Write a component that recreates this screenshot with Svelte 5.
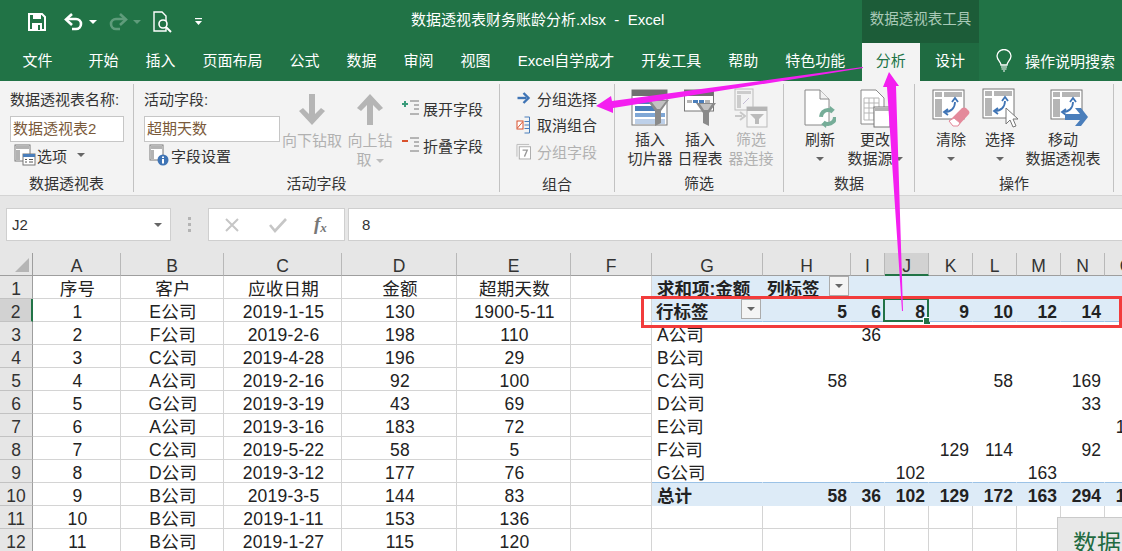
<script>
  const tabs = ["文件", "开始", "插入", "页面布局", "公式", "数据", "审阅", "视图", "Excel自学成才", "开发工具", "帮助", "特色功能"];
  const letters = ["A", "B", "C", "D", "E", "F", "G", "H", "I", "J", "K", "L", "M", "N", "O"];

  // left table, columns A-E
  const left = [
    ["序号", "客户", "应收日期", "金额", "超期天数"],
    ["1", "E公司", "2019-1-15", "130", "1900-5-11"],
    ["2", "F公司", "2019-2-6", "198", "110"],
    ["3", "C公司", "2019-4-28", "196", "29"],
    ["4", "A公司", "2019-2-16", "92", "100"],
    ["5", "G公司", "2019-3-19", "43", "69"],
    ["6", "A公司", "2019-3-16", "183", "72"],
    ["7", "C公司", "2019-5-22", "58", "5"],
    ["8", "D公司", "2019-3-12", "177", "76"],
    ["9", "B公司", "2019-3-5", "144", "83"],
    ["10", "B公司", "2019-1-11", "153", "136"],
    ["11", "B公司", "2019-1-27", "115", "120"]
  ];

  // pivot, columns G-O
  const pivot = [
    ["求和项:金额", "列标签", "", "", "", "", "", "", ""],
    ["行标签", "5", "6", "8", "9", "10", "12", "14", ""],
    ["A公司", "", "36", "", "", "", "", "", ""],
    ["B公司", "", "", "", "", "", "", "", ""],
    ["C公司", "58", "", "", "", "58", "", "169", ""],
    ["D公司", "", "", "", "", "", "", "33", ""],
    ["E公司", "", "", "", "", "", "", "", "130"],
    ["F公司", "", "", "", "129", "114", "", "92", ""],
    ["G公司", "", "", "102", "", "", "163", "", ""],
    ["总计", "58", "36", "102", "129", "172", "163", "294", "130"],
    ["", "", "", "", "", "", "", "", ""],
    ["", "", "", "", "", "", "", "", ""]
  ];
</script>

<div class="page">
  <header class="titlebar">
    <div class="qat">
      <svg width="18" height="18" viewBox="0 0 18 18"><path d="M1 1h13l3 3v13H1z" fill="none" stroke="#fff" stroke-width="2"/><rect x="5" y="1" width="8" height="5" fill="#fff"/><rect x="4" y="10" width="10" height="7" fill="#fff"/><rect x="10" y="12" width="2" height="5" fill="#217346"/></svg>
      <svg class="undo" width="20" height="18" viewBox="0 0 20 18"><path d="M3 6h9a5 5 0 0 1 0 10H8" fill="none" stroke="#fff" stroke-width="2.6"/><path d="M8 1L2 6.500 8 12" fill="none" stroke="#fff" stroke-width="2.600"/></svg>
      <i class="caret white"></i>
      <svg class="redo" width="20" height="18" viewBox="0 0 20 18"><path d="M17 6H8a5 5 0 0 0 0 10h4" fill="none" stroke="#5f9c7b" stroke-width="2.6"/><path d="M12 1l6 5.500-6 5.500" fill="none" stroke="#5f9c7b" stroke-width="2.600"/></svg>
      <i class="caret dim"></i>
      <svg class="preview" width="20" height="22" viewBox="0 0 20 22"><path d="M1 1h8l4 4v15H1z" fill="#217346" stroke="#fff" stroke-width="1.400"/><circle cx="10" cy="13" r="4" fill="#217346" stroke="#fff" stroke-width="1.600"/><path d="M13 16l5 5" stroke="#fff" stroke-width="2"/></svg>
      <svg class="custom" width="8" height="8" viewBox="0 0 8 8"><rect y="0" width="7" height="1.200" fill="#fff"/><path d="M0 3h7L3.500 7z" fill="#fff"/></svg>
    </div>
    <div class="title">数据透视表财务账龄分析.xlsx&nbsp; -&nbsp; Excel</div>
    <div class="ctx">数据透视表工具</div>
  </header>

  <nav class="tabs">
    {#each tabs as t, i (t)}
      <span class="tab" class:first={i === 0}>{t}</span>
    {/each}
    <span class="tab active">分析</span>
    <span class="tab design">设计</span>
    <div class="search">
      <svg width="18" height="23" viewBox="0 0 18 23"><path d="M6 16c0-3-4-5-4-9a7 6.500 0 0 1 14 0c0 4-4 6-4 9z" fill="none" stroke="#fff" stroke-width="1.300"/><path d="M6 18h6M6.500 20h5M8 22h2" stroke="#fff" stroke-width="1.200"/></svg>
      <span>操作说明搜索</span>
    </div>
  </nav>

  <section class="ribbon">
    <div class="group g1">
      <div class="body col">
        <div class="lbl">数据透视表名称:</div>
        <div class="inp w114">数据透视表2</div>
        <div class="row opt">
          <svg width="22" height="22" viewBox="0 0 22 22"><rect x="1" y="1" width="15" height="16" fill="#fff" stroke="#777"/><rect x="2" y="2" width="13" height="3" fill="#b3b3b3"/><rect x="2" y="6" width="4" height="10" fill="#b3b3b3"/><rect x="9" y="10" width="12" height="11" fill="#fff" stroke="#777"/><rect x="9" y="10" width="12" height="3" fill="#4a7ebb"/><path d="M11 15.500h2M15 15.500h4M11 18h2M15 18h4" stroke="#555"/></svg>
          <span>选项</span>
          <i class="caret gray opt-caret"></i>
        </div>
      </div>
      <div class="glabel">数据透视表</div>
    </div>

    <div class="group g2">
      <div class="body">
        <div class="col field">
          <div class="lbl">活动字段:</div>
          <div class="inp w136">超期天数</div>
          <div class="row opt sett">
            <svg width="20" height="22" viewBox="0 0 20 22"><rect x="1" y="1" width="13" height="15" fill="#fff" stroke="#777"/><rect x="2" y="2" width="11" height="3" fill="#b3b3b3"/><rect x="2" y="6" width="3" height="9" fill="#b3b3b3"/><circle cx="14" cy="16" r="5.500" fill="#3f74b5"/><rect x="13" y="15" width="2" height="4.500" fill="#fff"/><rect x="13" y="12.500" width="2" height="1.500" fill="#fff"/></svg>
            <span>字段设置</span>
          </div>
        </div>
        <div class="big off down">
          <svg width="28" height="34" viewBox="0 0 28 34"><path d="M14 32L1 18l4-3 6 6V1h6v20l6-6 4 3z" fill="#b5b5b5"/></svg>
          <span>向下钻取</span>
        </div>
        <div class="big off up">
          <svg width="28" height="34" viewBox="0 0 28 34"><path d="M14 1L1 15l4 3 6-6v20h6V12l6 6 4-3z" fill="#b5b5b5"/></svg>
          <span>向上钻</span>
          <span>取 <i class="caret light"></i></span>
        </div>
        <div class="col stack2">
          <div class="row">
            <svg width="18" height="16" viewBox="0 0 18 16"><path d="M0 4h6M3 1v6" stroke="#3a9b7a" stroke-width="2"/><path d="M8 1h9M12 5h5M12 9h5M8 14h9" stroke="#777"/></svg>
            <span>展开字段</span>
          </div>
          <div class="row">
            <svg width="18" height="16" viewBox="0 0 18 16"><path d="M0 4h6" stroke="#d9512c" stroke-width="2"/><path d="M8 1h9M12 5h5M12 9h5M8 14h9" stroke="#777"/></svg>
            <span>折叠字段</span>
          </div>
        </div>
      </div>
      <div class="glabel">活动字段</div>
    </div>

    <div class="group g3">
      <div class="body col stack3">
        <div class="row">
          <svg width="14" height="12" viewBox="0 0 14 12"><path d="M1 6h9" stroke="#3f74b5" stroke-width="2.400"/><path d="M7 1l5 5-5 5" fill="none" stroke="#3f74b5" stroke-width="2.400"/></svg>
          <span>分组选择</span>
        </div>
        <div class="row">
          <svg width="14" height="18" viewBox="0 0 14 18"><rect x="0.500" y="5" width="6" height="8" fill="#fff" stroke="#d9512c"/><path d="M1 12l5-6" stroke="#d9512c"/><path d="M8 1h5v16H8M8 5.500h5M8 9h5M8 12.500h5" fill="none" stroke="#4a7ebb"/></svg>
          <span>取消组合</span>
        </div>
        <div class="row off">
          <svg width="16" height="18" viewBox="0 0 16 18"><path d="M1 15V2h13" fill="none" stroke="#bbb"/><rect x="3.500" y="4.500" width="12" height="13" fill="#fff" stroke="#aaa"/><path d="M7 8h5l-3 7" fill="none" stroke="#999" stroke-width="1.400"/></svg>
          <span>分组字段</span>
        </div>
      </div>
      <div class="glabel">组合</div>
    </div>

    <div class="group g4">
      <div class="body">
        <div class="big slicer">
          <svg width="38" height="38" viewBox="0 0 38 38"><rect x="1" y="1" width="35" height="35" fill="#fff" stroke="#777"/><rect x="1" y="1" width="35" height="6" fill="#707070"/><rect x="4" y="10" width="22" height="5" fill="#4a7ebb"/><rect x="4" y="17" width="26" height="5" fill="#4a7ebb"/><rect x="4" y="24" width="30" height="4" fill="#7fa7d6"/><rect x="4" y="30" width="30" height="5" fill="#bdd0e9"/><path d="M16 11h22l-8 11v12l-6 3V22z" fill="#8a8a8a"/><path d="M20 12h15l-6 8h-3z" fill="#c2c2c2"/></svg>
          <span>插入</span>
          <span>切片器</span>
        </div>
        <div class="big slicer">
          <svg width="32" height="38" viewBox="0 0 32 38"><rect x="0.500" y="1" width="29" height="21" fill="#fff" stroke="#777"/><rect x="0.500" y="1" width="29" height="6" fill="#707070"/><rect x="3" y="11" width="5" height="3" fill="#b5b5b5"/><rect x="9" y="11" width="5" height="3" fill="#4a7ebb"/><rect x="15" y="11" width="5" height="3" fill="#4a7ebb"/><rect x="21" y="11" width="5" height="3" fill="#b5b5b5"/><path d="M12 14h20l-7 10v13l-6-3V24z" fill="#8a8a8a"/><path d="M16 15h12l-4 6h-4z" fill="#c2c2c2"/></svg>
          <span>插入</span>
          <span>日程表</span>
        </div>
        <div class="big off conn">
          <svg width="34" height="40" viewBox="0 0 34 40"><rect x="1" y="1" width="18" height="21" fill="#f3f3f3" stroke="#bbb"/><rect x="3" y="3" width="14" height="3" fill="#ccc"/><rect x="3" y="7" width="4" height="13" fill="#ccc"/><path d="M9 16l6-6" stroke="#c4bcd4"/><rect x="13" y="19" width="20" height="20" fill="#f6f6f6" stroke="#bbb"/><rect x="13" y="19" width="20" height="4" fill="#b5b5b5"/><path d="M16 26h14l-5 5v5h-4v-5z" fill="#bbb"/><path d="M1 28h7M6 24l5 4-5 4" fill="none" stroke="#c8c8c8" stroke-width="2"/></svg>
          <span>筛选</span>
          <span>器连接</span>
        </div>
      </div>
      <div class="glabel">筛选</div>
    </div>

    <div class="group g5">
      <div class="body">
        <div class="big refresh">
          <svg width="32" height="38" viewBox="0 0 32 38"><path d="M1 1h15l9 9v26H1z" fill="#fff" stroke="#888"/><path d="M16 1v9h9" fill="#f3f3f3" stroke="#888"/><circle cx="24" cy="28" r="7" fill="none" stroke="#76ad98" stroke-width="4" stroke-dasharray="16 6"/><path d="M26 17l5 4-6 2zM22 39l-5-4 6-2z" fill="#76ad98"/></svg>
          <span>刷新</span>
          <i class="caret gray"></i>
        </div>
        <div class="big change">
          <svg width="30" height="38" viewBox="0 0 30 38"><path d="M1 1h15l8 8v26H1z" fill="#fff" stroke="#888"/><path d="M4 9h15v22H4zM9 9v22M14 9v22M4 14h15M4 19h15M4 24h15" fill="none" stroke="#b5b5b5"/><rect x="14" y="18" width="16" height="20" fill="#fff" stroke="#777"/><rect x="15" y="19" width="14" height="3" fill="#b3b3b3"/></svg>
          <span>更改</span>
          <span>数据源<i class="caret gray near"></i></span>
        </div>
      </div>
      <div class="glabel">数据</div>
    </div>

    <div class="group g6">
      <div class="body">
        <div class="big clear">
          <svg width="38" height="38" viewBox="0 0 38 38"><rect x="1" y="1" width="31" height="29" fill="#fff" stroke="#777"/><rect x="3" y="3" width="7" height="5" fill="#b5b5b5"/><rect x="12" y="3" width="18" height="5" fill="#b5b5b5"/><rect x="3" y="10" width="7" height="18" fill="#b5b5b5"/><path d="M13 23c6 0 10-4 10-10M20 13l3-4 3 4M16 20l-4 3 4 3" fill="none" stroke="#3f74b5" stroke-width="1.800"/><path d="M17 32l13-13q2-1 4 0l3 3q1 2 0 3L26 37h-5z" fill="#e48a9b"/><path d="M17 32l4 5h5l2-3-6-5z" fill="#fff" stroke="#e48a9b"/></svg>
          <span>清除</span>
          <i class="caret gray"></i>
        </div>
        <div class="big pick">
          <svg width="36" height="40" viewBox="0 0 36 40"><rect x="1" y="1" width="31" height="29" fill="#fff" stroke="#777"/><rect x="3" y="3" width="7" height="5" fill="#b5b5b5"/><rect x="12" y="3" width="18" height="5" fill="#b5b5b5"/><rect x="3" y="10" width="7" height="18" fill="#b5b5b5"/><path d="M13 23c6 0 10-4 10-10M20 13l3-4 3 4M16 20l-4 3 4 3" fill="none" stroke="#3f74b5" stroke-width="1.800"/><path d="M24 20v16l4-4 3 7 3-1-3-7h5z" fill="#fff" stroke="#777"/></svg>
          <span>选择</span>
          <i class="caret gray"></i>
        </div>
        <div class="big move">
          <svg width="38" height="38" viewBox="0 0 38 38"><rect x="1" y="1" width="31" height="29" fill="#fff" stroke="#777"/><rect x="3" y="3" width="7" height="5" fill="#b5b5b5"/><rect x="12" y="3" width="18" height="5" fill="#b5b5b5"/><rect x="3" y="10" width="7" height="18" fill="#b5b5b5"/><path d="M13 23c6 0 10-4 10-10M20 13l3-4 3 4M16 20l-4 3 4 3" fill="none" stroke="#3f74b5" stroke-width="1.800"/><path d="M15 25h15l-5-6h6l7 9-7 9h-6l5-6H15z" fill="#4a7ebb"/></svg>
          <span>移动</span>
          <span>数据透视表</span>
        </div>
      </div>
      <div class="glabel">操作</div>
    </div>
  </section>

  <section class="formula">
    <div class="namebox"><span>J2</span><i class="caret gray"></i></div>
    <div class="dots"><b></b><b></b><b></b></div>
    <div class="fbtns">
      <svg width="16" height="16" viewBox="0 0 16 16"><path d="M2 2l12 12M14 2L2 14" stroke="#c6c6c6" stroke-width="2"/></svg>
      <svg width="18" height="16" viewBox="0 0 18 16"><path d="M1 8l5 6L17 2" fill="none" stroke="#c6c6c6" stroke-width="2.600"/></svg>
      <span class="fx">f<sub>x</sub></span>
    </div>
    <div class="finput">8</div>
  </section>

  <section class="sheet">
    <div class="hd corner"><svg width="14" height="14" viewBox="0 0 14 14"><path d="M14 0v14H0z" fill="#b5b5b5"/></svg></div>
    {#each letters as l (l)}
      <div class="hd" class:sel={l === "J"}>{l}</div>
    {/each}

    {#each left as row, r}
      <div class="rh" class:sel={r === 1}>{r + 1}</div>
      {#each row as v}
        <div class="c mid">{v}</div>
      {/each}
      <div class="c"></div>
      {#each pivot[r] as v, i}
        <div
          class="c"
          class:pv={r < 10}
          class:blue={r < 2 || r === 9}
          class:strong={r < 2 || r === 9}
          class:line={r === 1 || r === 8}
          class:num={i > 0 && r > 0}
          class:lft={i === 0}
          class:withbtn={(r === 0 && i === 1) || (r === 1 && i === 0)}
        >
          <span>{v}</span>
          {#if (r === 0 && i === 1) || (r === 1 && i === 0)}
            <i class="drop"><i class="caret gray"></i></i>
          {/if}
          {#if r === 1 && i === 3}
            <i class="cursor"></i>
            <i class="handle"></i>
          {/if}
        </div>
      {/each}
    {/each}
  </section>

  <div class="redbox"></div>
  <div class="floating">数据</div>

  <svg class="arrows" width="1122" height="551" viewBox="0 0 1122 551">
    <path d="M863 67L612 101l-1-5-15 10 17 7v-5L863 68z" fill="#f41ff0"/>
    <path d="M889 72L899 86L896 86L903 311L902 311L887 87L883 87z" fill="#f41ff0"/>
  </svg>
</div>

<style>
  :global(body) {
    margin: 0;
    overflow: hidden;
  }
  .page {
    position: relative;
    width: 1122px;
    height: 551px;
    overflow: hidden;
    font-family: "Liberation Sans", "Noto Sans CJK SC", sans-serif;
    font-size: 15px;
    color: #333;
  }
  .titlebar {
    display: flex;
    height: 43px;
    background: #217346;
    color: #fff;
  }
  .qat {
    width: 383px;
    padding-left: 28px;
    display: flex;
    align-items: center;
  }
  .undo { margin-left: 18px; }
  .qat .caret { margin-left: 5px; }
  .redo { margin-left: 11px; }
  .preview { margin-left: 12px; }
  .custom { margin-left: 22px; }
  .title {
    width: 451px;
    font-size: 15px;
    line-height: 39px;
    white-space: nowrap;
  }
  .ctx {
    width: 117px;
    background: #1c5c38;
    color: #a9c9b7;
    text-align: center;
    line-height: 38px;
    font-size: 14.500px;
  }
  .tabs {
    display: flex;
    height: 38px;
    align-items: stretch;
    background: #217346;
    color: #fff;
    padding-left: 9px;
  }
  .tab {
    padding: 0 13.500px;
    line-height: 35px;
    white-space: nowrap;
  }
  .tab.first { margin-right: 9px; }
  .tab.active {
    margin-left: 3px;
    padding: 0 14px;
    background: #f3f3f3;
    color: #217346;
  }
  .tab.design {
    width: 59px;
    box-sizing: border-box;
    padding: 0 15px;
    background: #1f6b41;
  }
  .search {
    display: flex;
    align-items: center;
    color: #fff;
    padding-left: 16px;
    gap: 12px;
    margin-top: -3px;
  }
  .ribbon {
    display: flex;
    background: #f3f3f3;
    border-bottom: 1px solid #d4d4d4;
    padding-top: 3px;
    height: 111px;
  }
  .group {
    display: flex;
    flex-direction: column;
    box-sizing: border-box;
    height: 108px;
    border-right: 1px solid #c2c2c2;
    flex: none;
  }
  .g1 { width: 134px; padding-left: 10px; }
  .g2 { width: 366px; }
  .g3 { width: 115px; }
  .g4 { width: 169px; }
  .g5 { width: 131px; }
  .g6 { width: 199px; }
  .body {
    display: flex;
    flex: none;
    height: 87px;
  }
  .col {
    display: flex;
    flex-direction: column;
  }
  .row {
    display: flex;
    align-items: center;
  }
  .glabel {
    height: 18px;
    margin-top: 3px;
    text-align: center;
    line-height: 20px;
  }
  .g1 .glabel { margin-left: -10px; }
  .lbl {
    line-height: 20px;
    margin-top: 6px;
    white-space: nowrap;
  }
  .inp {
    box-sizing: border-box;
    height: 26px;
    margin-top: 6px;
    background: #fff;
    border: 1px solid #c6c6c6;
    line-height: 24px;
    padding-left: 2px;
    color: #7a5a3a;
  }
  .w114 { width: 114px; }
  .w136 { width: 136px; }
  .opt {
    margin-top: 2px;
    margin-left: 4px;
    gap: 1px;
    height: 22px;
  }
  .opt-caret { margin-left: 9px; }
  .field { width: 136px; margin-left: 10px; }
  .sett { margin-left: 5px; gap: 2px; }
  .big {
    display: flex;
    flex-direction: column;
    align-items: center;
    flex: none;
    line-height: 19px;
    white-space: nowrap;
  }
  .big svg {
    height: 40px;
    margin-top: 4px;
    margin-bottom: 2px;
    flex: none;
  }
  .off { color: #b1b1b1; }
  .off .caret { border-top-color: #b1b1b1; }
  .down { width: 62px; margin-left: 1px; }
  .down svg { margin-top: 6px; margin-bottom: 1px; }
  .up { width: 50px; margin-left: 2px; margin-right: 7px; }
  .up svg { margin-top: 6px; margin-bottom: 1px; }
  .stack2 { padding-top: 14px; gap: 17px; }
  .stack2 .row { height: 20px; gap: 3px; }
  .stack3 { padding: 1px 0 0 16px; }
  .stack3 .row { height: 26.500px; }
  .stack3 svg { width: 15px; margin-right: 6px; flex: none; }
  .slicer { width: 50px; }
  .g4 .body { padding-left: 10px; }
  .conn { width: 50px; margin-left: 1px; }
  .big .caret { margin-top: 8px; }
  .g5 .body { padding-left: 11px; }
  .refresh { width: 50px; }
  .change { width: 60px; margin-left: 0; }
  .big .near { margin: 0 0 3px 2px; }
  .g6 .body { padding-left: 11px; }
  .clear { width: 50px; }
  .pick { width: 48px; }
  .move { width: 78px; }
  .move svg { margin-left: 12px; }

  .caret {
    display: inline-block;
    width: 0;
    height: 0;
    border-left: 4px solid transparent;
    border-right: 4px solid transparent;
    border-top: 4px solid #666;
    flex: none;
  }
  .caret.white { border-top-color: #fff; }
  .caret.dim { border-top-color: #5f9c7b; }
  .caret.light { border-top-color: #bdbdbd; vertical-align: 2px; }

  .formula {
    display: flex;
    align-items: center;
    height: 57px;
    padding-left: 6px;
    box-sizing: border-box;
    background: #e6e6e6;
  }
  .namebox, .fbtns, .finput {
    box-sizing: border-box;
    height: 33px;
    background: #fff;
    border: 1px solid #cfcfcf;
    display: flex;
    align-items: center;
  }
  .namebox {
    width: 165px;
    justify-content: space-between;
    padding: 0 8px 0 5px;
  }
  .dots {
    width: 37px;
    display: flex;
    flex-direction: column;
    align-items: center;
    gap: 3px;
  }
  .dots b {
    width: 3px;
    height: 3px;
    background: #b4b4b4;
  }
  .fbtns {
    width: 137px;
    padding-left: 15px;
    gap: 29px;
  }
  .fx {
    margin-left: -2px;
    font-family: "Liberation Serif", serif;
    font-style: italic;
    font-weight: bold;
    font-size: 19px;
    color: #777;
  }
  .fx sub { font-size: 13px; vertical-align: -2px; }
  .finput {
    flex: 1;
    margin-left: 3px;
    padding-left: 13px;
    border-right: none;
  }

  .sheet {
    display: grid;
    grid-template-columns: 33px 88px 103px 118px 115px 114px 81px 111px 88px 34px 44px 44px 44px 44px 44px 44px;
    grid-auto-rows: 23px;
    width: 1149px;
    font-size: 17.500px;
    line-height: 26px;
    color: #222;
    background: #fff;
  }
  .hd, .rh, .c {
    box-sizing: border-box;
    white-space: nowrap;
  }
  .hd {
    background: #e6e6e6;
    border-right: 1px solid #b8b8b8;
    border-bottom: 1px solid #9e9e9e;
    text-align: center;
    color: #333;
  }
  .hd.corner {
    display: flex;
    justify-content: flex-end;
    align-items: flex-end;
    padding: 0 3px 3px 0;
    border-right-color: #9e9e9e;
  }
  .hd.sel {
    background: #d2d2d2;
    border-bottom: 2px solid #217346;
  }
  .rh {
    background: #e6e6e6;
    border-right: 1px solid #9e9e9e;
    border-bottom: 1px solid #c2c2c2;
    text-align: center;
    color: #333;
  }
  .rh.sel {
    background: #d2d2d2;
    border-right: 2px solid #217346;
  }
  .c {
    position: relative;
    border-right: 1px solid #d4d4d4;
    border-bottom: 1px solid #d4d4d4;
  }
  .mid {
    text-align: center;
    letter-spacing: 0.200px;
    padding-left: 2px;
  }
  .pv {
    border-right-color: transparent;
    border-bottom-color: transparent;
  }
  .blue { background: #ddebf7; }
  .strong { font-weight: bold; }
  .line { border-bottom-color: #9bc2e6; }
  .num {
    text-align: right;
    padding-right: 3px;
  }
  .lft { padding-left: 5px; }
  .withbtn {
    display: flex;
    align-items: flex-start;
    justify-content: space-between;
    padding-left: 4px;
  }
  .drop {
    box-sizing: border-box;
    width: 20px;
    height: 20px;
    margin-right: 1px;
    border: 1px solid #ababab;
    background: #f4f4f4;
    display: flex;
    align-items: center;
    justify-content: center;
  }
  .cursor {
    position: absolute;
    left: -2px;
    top: -1px;
    right: -1px;
    bottom: -1px;
    border: 2px solid #217346;
  }
  .handle {
    position: absolute;
    right: -3px;
    bottom: -4px;
    width: 6px;
    height: 6px;
    background: #217346;
    border: 1px solid #fff;
  }
  .redbox {
    position: absolute;
    left: 641px;
    top: 296px;
    width: 481px;
    height: 32px;
    box-sizing: border-box;
    border: 3px solid #f23c3c;
  }
  .floating {
    position: absolute;
    left: 1057px;
    top: 517px;
    width: 80px;
    height: 50px;
    padding: 11px 0 0 15px;
    background: #e8e8e8;
    border: 1px solid #cacaca;
    font-size: 24px;
    line-height: 30px;
    color: #1f6b41;
  }
  .arrows {
    position: absolute;
    left: 0;
    top: 0;
    pointer-events: none;
  }
</style>
